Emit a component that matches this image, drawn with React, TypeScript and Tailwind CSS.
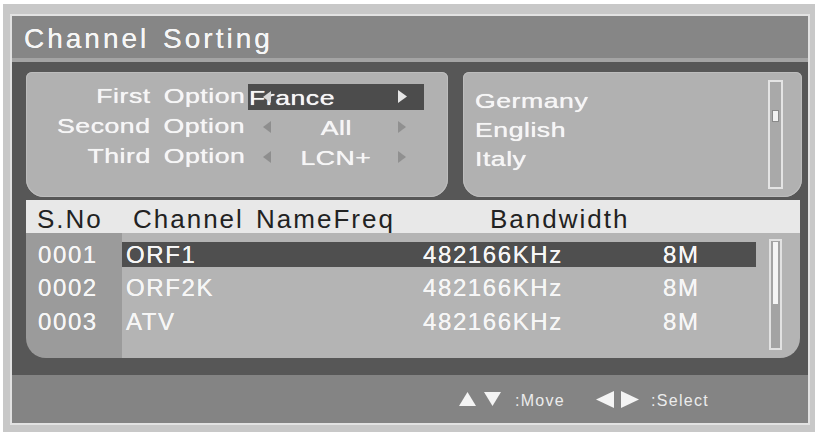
import React from "react";

type Dir = "left" | "right" | "up" | "down";

const POINTS: Record<Dir, string> = {
  left: "10,0 10,10 0,5",
  right: "0,0 0,10 10,5",
  up: "5,0 10,10 0,10",
  down: "0,0 10,0 5,10",
};

function Tri({ dir, className }: { dir: Dir; className: string }) {
  return (
    <svg viewBox="0 0 10 10" preserveAspectRatio="none" className={className}>
      <polygon points={POINTS[dir]} fill="currentColor" />
    </svg>
  );
}

const OPTIONS = [
  { label: "First Option", value: "France", active: true },
  { label: "Second Option", value: "All", active: false },
  { label: "Third Option", value: "LCN+", active: false },
];

const LANGS = ["Germany", "English", "Italy"];

const CHANNELS = [
  { no: "0001", name: "ORF1", freq: "482166KHz", bw: "8M", selected: true },
  { no: "0002", name: "ORF2K", freq: "482166KHz", bw: "8M", selected: false },
  { no: "0003", name: "ATV", freq: "482166KHz", bw: "8M", selected: false },
];

// the OSD font in the option panels is a horizontally stretched sans
const panelText =
  "inline-block scale-x-[1.27] text-[21px] tracking-[0.4px] [word-spacing:4px] text-[#f6f6f6] leading-none [text-shadow:0_0_0.6px_#ffffff]";

function OptionRow({ label, value, active }: { label: string; value: string; active: boolean }) {
  return (
    <div className="flex items-center h-[30px]">
      <div className="w-[219px] mr-[3px] text-right">
        <span className={`${panelText} origin-right`}>{label}</span>
      </div>
      <div
        className={
          active
            ? "relative w-[176px] h-[26px] flex items-center bg-[#4c4c4c]"
            : "relative w-[176px] h-[26px] flex items-center justify-center"
        }
      >
        <span className={active ? `${panelText} origin-left ml-[1px]` : `${panelText} origin-center`}>
          {value}
        </span>
        {/* selector arrows sit over the value text */}
        <Tri
          dir="left"
          className={
            active
              ? "absolute left-[15px] top-[7px] w-[8px] h-[12px] text-[#d6d6d6]"
              : "absolute left-[15px] top-[7px] w-[8px] h-[12px] text-[#8e8e8e]"
          }
        />
        <Tri
          dir="right"
          className={
            active
              ? "absolute left-[150px] top-[6px] w-[9px] h-[13px] text-[#e6e6e6]"
              : "absolute left-[150px] top-[7px] w-[8px] h-[12px] text-[#909090]"
          }
        />
      </div>
    </div>
  );
}

export default function App() {
  return (
    <div className="w-[818px] h-[437px] bg-white pt-[4px] pl-[3px] pr-[3px] font-['Liberation_Sans',Arial,sans-serif]">
      <div className="h-[428px] bg-[#c8c8c8] pl-[7px] pt-[10px] pr-[5px] pb-[7px]">
        <div className="h-full border-2 border-[#e2e2e2] flex flex-col">
          {/* Title */}
          <div className="h-[46px] shrink-0 bg-[#868686] border-b-[4px] border-[#a4a4a4] flex items-center pl-[12px] pt-[4px]">
            <h1 className="text-[28px] tracking-[3px] [word-spacing:3px] text-[#f6f6f6] leading-none [text-shadow:0_0_0.6px_#ffffff]">
              Channel Sorting
            </h1>
          </div>

          {/* Body */}
          <div className="h-[313px] shrink-0 bg-[#575757] pl-[14px] pr-[6px] pt-[10px] flex flex-col">
            <div className="flex gap-[15px] h-[125px] shrink-0">
              <div className="w-[422px] bg-[#b1b1b1] rounded-t-[6px] rounded-b-[18px] shadow-[inset_0_0_0_1px_#bdbdbd] pt-[10px]">
                {OPTIONS.map((o) => (
                  <OptionRow key={o.label} {...o} />
                ))}
              </div>
              <div className="w-[339px] bg-[#b1b1b1] rounded-t-[6px] rounded-b-[18px] shadow-[inset_0_0_0_1px_#bdbdbd] flex pl-[12px] pr-[19px] py-[8px]">
                <div className="flex-1 pt-[6px]">
                  {LANGS.map((l) => (
                    <div key={l} className="h-[29px] flex items-center">
                      <span className={`${panelText} origin-left`}>{l}</span>
                    </div>
                  ))}
                </div>
                <div className="w-[15px] h-full border-2 border-[#e4e4e4] bg-[#a9a9a9] flex justify-center">
                  <div className="mt-[28px] w-[7px] h-[12px] bg-[#f2f2f2] border border-[#8a8a8a]" />
                </div>
              </div>
            </div>

            {/* Channel list header */}
            <div className="mt-[3px] shrink-0 w-[774px] h-[33px] bg-[#e8e8e8] flex items-center pt-[5px] text-[26px] tracking-[2px] text-[#222] leading-none">
              <div className="w-[107px] pl-[11px]">S.No</div>
              <div className="w-[357px] [word-spacing:3px]">Channel NameFreq</div>
              <div>Bandwidth</div>
            </div>

            {/* Channel list */}
            <div className="w-[774px] h-[125px] shrink-0 rounded-b-[20px] bg-[linear-gradient(to_right,#9b9b9b_96px,#b4b4b4_96px)] flex">
              <div className="w-[730px] pt-[5px]">
                {CHANNELS.map((c) => (
                  <div key={c.no} className="h-[33.5px] flex items-center text-[24px] tracking-[1.6px] text-[#f6f6f6] leading-none [text-shadow:0_0_0.6px_#ffffff]">
                    <div className="w-[96px] pl-[12px]">{c.no}</div>
                    <div
                      className={
                        c.selected
                          ? "w-[634px] h-[25px] flex items-center pl-[4px] bg-[#4f4f4f]"
                          : "w-[634px] h-[25px] flex items-center pl-[4px]"
                      }
                    >
                      <div className="w-[297px]">{c.name}</div>
                      <div className="w-[240px]">{c.freq}</div>
                      <div>{c.bw}</div>
                    </div>
                  </div>
                ))}
              </div>
              <div className="ml-[13px] mt-[6px] w-[13px] h-[111px] border-2 border-[#e2e2e2] bg-[#a3a3a3] flex justify-center">
                <div className="mt-[1px] w-[5px] h-[62px] bg-[#f4f4f4]" />
              </div>
            </div>
          </div>

          {/* Footer */}
          <div className="h-[48px] shrink-0 bg-[#848484] flex items-center pl-[447px] text-[16px] tracking-[1.3px] text-[#ececec] leading-none">
            <Tri dir="up" className="w-[17px] h-[14px] text-[#f4f4f4]" />
            <Tri dir="down" className="ml-[8px] w-[17px] h-[14px] text-[#f4f4f4]" />
            <span className="ml-[14px] pt-[3px]">:Move</span>
            <Tri dir="left" className="ml-[31px] w-[18px] h-[17px] text-[#f4f4f4]" />
            <Tri dir="right" className="ml-[7px] w-[18px] h-[17px] text-[#f4f4f4]" />
            <span className="ml-[12px] pt-[3px]">:Select</span>
          </div>
        </div>
      </div>
    </div>
  );
}
